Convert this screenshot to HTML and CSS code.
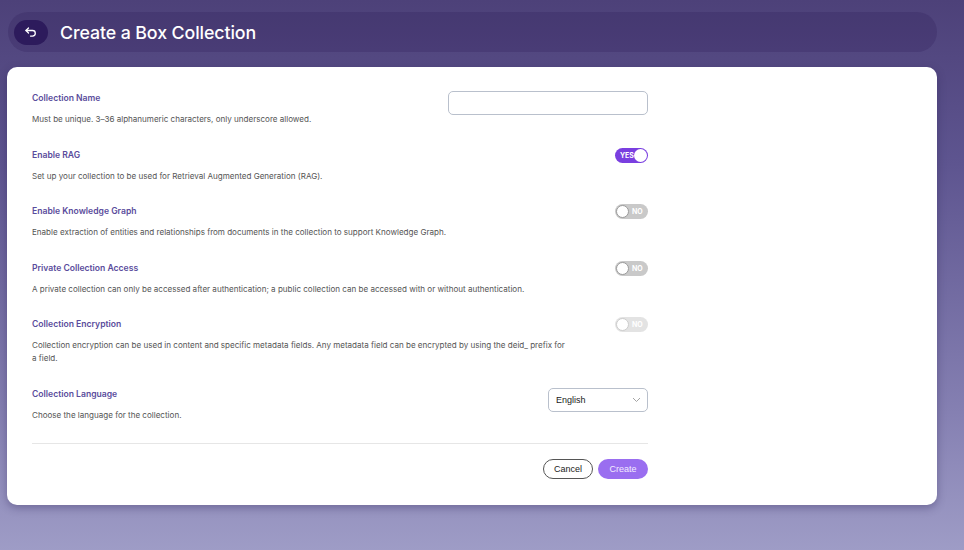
FILE: index.html
```html
<!DOCTYPE html>
<html>
<head>
<meta charset="utf-8">
<link rel="stylesheet" href="styles.css">
</head>
<body>
<header class="topbar">
  <button class="back-btn" aria-label="Back">
    <svg width="12" height="10" viewBox="0 0 12 10" fill="none" stroke="#fff" stroke-width="1.3" stroke-linecap="round" stroke-linejoin="round">
      <path d="M3.5 1 L1 3.5 L3.5 6"/>
      <path d="M1 3.5 H7.5 a2.8 2.8 0 0 1 0 5.6 H5.5"/>
    </svg>
  </button>
  <h1 class="title">Create a Box Collection</h1>
</header>
<main class="card">
  <div class="row">
    <div class="info">
      <div class="label">Collection Name</div>
      <div class="desc">Must be unique. 3–36 alphanumeric characters, only underscore allowed.</div>
    </div>
    <input class="text-input" type="text">
  </div>
  <div class="row">
    <div class="info">
      <div class="label">Enable RAG</div>
      <div class="desc">Set up your collection to be used for Retrieval Augmented Generation (RAG).</div>
    </div>
    <div class="toggle on"><span class="t-text">YES</span><span class="knob"></span></div>
  </div>
  <div class="row">
    <div class="info">
      <div class="label">Enable Knowledge Graph</div>
      <div class="desc">Enable extraction of entities and relationships from documents in the collection to support Knowledge Graph.</div>
    </div>
    <div class="toggle off"><span class="knob"></span><span class="t-text">NO</span></div>
  </div>
  <div class="row">
    <div class="info">
      <div class="label">Private Collection Access</div>
      <div class="desc">A private collection can only be accessed after authentication; a public collection can be accessed with or without authentication.</div>
    </div>
    <div class="toggle off"><span class="knob"></span><span class="t-text">NO</span></div>
  </div>
  <div class="row">
    <div class="info">
      <div class="label">Collection Encryption</div>
      <div class="desc">Collection encryption can be used in content and specific metadata fields. Any metadata field can be encrypted by using the deid_ prefix for a field.</div>
    </div>
    <div class="toggle off disabled"><span class="knob"></span><span class="t-text">NO</span></div>
  </div>
  <div class="row last">
    <div class="info">
      <div class="label">Collection Language</div>
      <div class="desc">Choose the language for the collection.</div>
    </div>
    <div class="select">
      <span>English</span>
      <svg width="9" height="6" viewBox="0 0 9 6" fill="none" stroke="#9a9a9a" stroke-width="0.9"><path d="M1 1 L4.5 4.5 L8 1"/></svg>
    </div>
  </div>
  <div class="divider"></div>
  <div class="actions">
    <button class="btn cancel">Cancel</button>
    <button class="btn create">Create</button>
  </div>
</main>
</body>
</html>
```
FILE: styles.css
```css
html, body {
  margin: 0;
  padding: 0;
}
body {
  width: 964px;
  height: 550px;
  overflow: hidden;
  font-family: Inter, "Noto Sans", sans-serif;
  background: linear-gradient(180deg, #4d4179 0%, #5e5590 30%, #8580b2 75%, #9e9cc6 100%);
}
.topbar {
  margin: 12px 27px 0 8px;
  height: 40px;
  border-radius: 20px;
  background: rgba(40, 25, 80, 0.22);
  display: flex;
  align-items: center;
  padding-left: 6px;
  box-sizing: border-box;
}
.back-btn {
  width: 34px;
  height: 25px;
  border: none;
  border-radius: 13px;
  background: #2d1b5c;
  display: flex;
  align-items: center;
  justify-content: center;
  padding: 0;
  margin-right: 12px;
}
.title {
  margin: 0;
  color: #fff;
  font-size: 17.8px;
  font-weight: 500;
  letter-spacing: -0.1px;
}
.card {
  margin: 15px 27px 0 7px;
  height: 438px;
  box-sizing: border-box;
  background: #fff;
  border-radius: 10px;
  box-shadow: 0 3px 8px rgba(40, 30, 80, 0.35);
  padding: 25px 289px 0 25px;
}
.row {
  display: flex;
  justify-content: space-between;
  align-items: flex-start;
  margin-bottom: 22.5px;
}
.row.last {
  margin-bottom: 21px;
}
.info {
  flex: 1;
  min-width: 0;
}
.label {
  font-size: 8.6px;
  font-weight: 600;
  line-height: 12px;
  color: #5a4c9c;
}
.desc {
  margin-top: 9px;
  max-width: 536px;
  font-size: 8.06px;
  line-height: 13px;
  color: #555;
}
.text-input {
  flex-shrink: 0;
  width: 200px;
  height: 24px;
  box-sizing: border-box;
  border: 1px solid #b9c0cc;
  border-radius: 5px;
  margin-top: -1px;
  outline: none;
}
.toggle {
  flex-shrink: 0;
  width: 33px;
  height: 15px;
  box-sizing: border-box;
  border-radius: 8px;
  display: flex;
  align-items: center;
  padding: 0 1px;
  margin-top: -1px;
  font-size: 7px;
  font-weight: 700;
  color: #fff;
}
.toggle .knob {
  width: 13px;
  height: 13px;
  border-radius: 50%;
  background: #fff;
  box-sizing: border-box;
}
.toggle.on {
  background: #7a3fe0;
  justify-content: space-between;
  padding-left: 5px;
}
.toggle.off {
  background: #c9c9c9;
  gap: 3px;
}
.toggle.off .knob {
  border: 1px solid #9a9a9a;
}
.toggle.disabled {
  opacity: 0.5;
}
.select {
  flex-shrink: 0;
  width: 100px;
  height: 24px;
  box-sizing: border-box;
  border: 1px solid #b9c0cc;
  border-radius: 5px;
  display: flex;
  align-items: center;
  justify-content: space-between;
  padding: 0 6px 0 7px;
  font-family: "Liberation Sans", Arial, sans-serif;
  font-size: 9px;
  color: #222;
}
.divider {
  height: 1px;
  background: #e6e6e6;
}
.actions {
  display: flex;
  justify-content: flex-end;
  gap: 5px;
  margin-top: 15px;
}
.btn {
  width: 50px;
  height: 20px;
  border-radius: 10px;
  font-family: "Liberation Sans", Arial, sans-serif;
  font-size: 9px;
  padding: 0;
}
.cancel {
  background: #fff;
  border: 1px solid #555;
  color: #222;
}
.create {
  background: #9a6ef0;
  border: none;
  color: #f2ecff;
}
```
